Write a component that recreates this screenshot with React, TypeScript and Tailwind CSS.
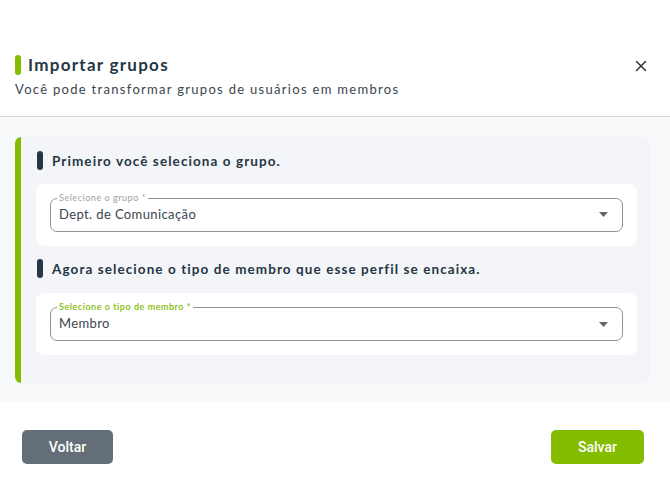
import { X } from "lucide-react";

const font = { fontFamily: "Lato, 'Open Sans', sans-serif" };

interface SelectProps {
  label: string;
  value: string;
  active?: boolean;
}

const OutlinedSelect = ({ label, value, active }: SelectProps) => (
  <div className="relative h-[34px] rounded-[7px] border border-[#8c959d] bg-white flex items-center pl-[8px] pr-[14px]">
    <span
      className={`absolute -top-[7px] left-[6px] bg-white px-[2px] text-[9px] leading-[12px] tracking-[0.06em] ${
        active ? "text-[#84bc00] font-semibold" : "text-[#9aa2a9]"
      }`}
    >
      {label}
    </span>
    <span className="flex-1 text-[13px] tracking-[0.03em] text-[#3a4650]">{value}</span>
    <svg width="9" height="5" viewBox="0 0 9 5" className="text-[#5f6870]">
      <path d="M0 0h9L4.5 5z" fill="currentColor" />
    </svg>
  </div>
);

const SectionTitle = ({ children }: { children: string }) => (
  <div className="flex items-center gap-[9px] pl-[1px]">
    <span className="w-[6px] h-[19px] rounded-full bg-[#263644]" />
    <h3 className="text-[13.5px] font-bold tracking-[0.08em] text-[#263644]">{children}</h3>
  </div>
);

export default function App() {
  return (
    <div style={font} className="w-[670px] h-[487px] bg-white flex flex-col">
      <div className="pt-[55px] px-[15px] pb-[16px] relative">
        <div className="flex items-center gap-[7px]">
          <span className="w-[6px] h-[20px] rounded-full bg-[#84bc00]" />
          <h2 className="text-[17px] font-bold tracking-[0.075em] text-[#263644] leading-[20px]">
            Importar grupos
          </h2>
        </div>
        <p className="mt-[5px] text-[13px] tracking-[0.1em] text-[#3a4650]">
          Você pode transformar grupos de usuários em membros
        </p>
        <X size={18} strokeWidth={2} className="absolute right-[20px] top-[57px] text-[#2b3640]" />
      </div>
      <div className="h-px bg-[#d3d8dc]" />

      <div className="bg-[#f8f9fb] pt-[20px] pb-[19px] pl-[15px] pr-[20px]">
        <div className="rounded-[6px] border-l-[6px] border-[#84bc00] bg-[#f3f5f8] pt-[14px] pb-[28px] pl-[15px] pr-[13px]">
          <SectionTitle>Primeiro você seleciona o grupo.</SectionTitle>
          <div className="mt-[13px] rounded-[8px] bg-white px-[14px] py-[14px]">
            <OutlinedSelect label="Selecione o grupo *" value="Dept. de Comunicação" />
          </div>
          <div className="mt-[13px]">
            <SectionTitle>Agora selecione o tipo de membro que esse perfil se encaixa.</SectionTitle>
          </div>
          <div className="mt-[14px] rounded-[8px] bg-white px-[14px] py-[14px]">
            <OutlinedSelect label="Selecione o tipo de membro *" value="Membro" active />
          </div>
        </div>
      </div>

      <div className="flex justify-between px-[22px] pt-[28px]" style={{ fontFamily: "Roboto, sans-serif" }}>
        <button className="w-[91px] h-[34px] rounded-[5px] bg-[#636e78] text-white text-[14px] font-medium">
          Voltar
        </button>
        <button className="w-[93px] h-[34px] mr-[4px] rounded-[5px] bg-[#84bc00] text-white text-[14px] font-medium">
          Salvar
        </button>
      </div>
    </div>
  );
}
